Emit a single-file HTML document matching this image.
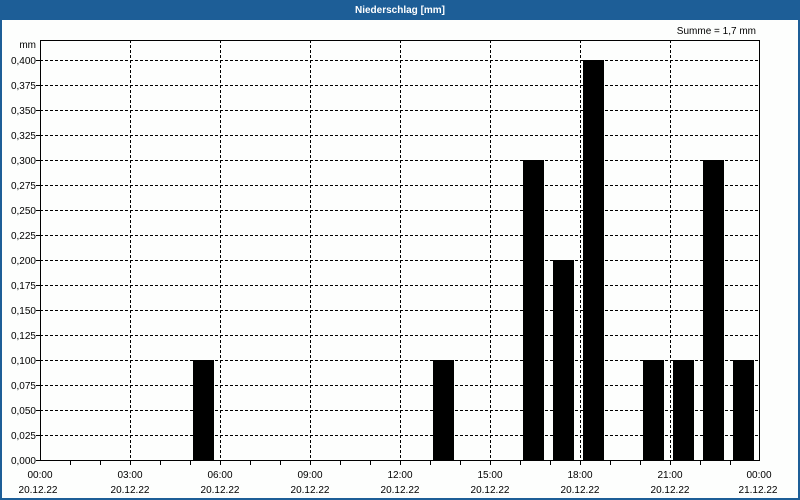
<!DOCTYPE html>
<html><head><meta charset="utf-8"><style>
html,body{margin:0;padding:0;background:#fff;}
svg{display:block;}
text{font-family:"Liberation Sans",sans-serif;font-size:10px;fill:#000;}
</style></head><body>
<svg width="800" height="500" viewBox="0 0 800 500" xmlns="http://www.w3.org/2000/svg">
<rect x="0" y="0" width="800" height="500" fill="#1d5e97"/>
<rect x="2" y="20" width="796" height="478" fill="#fdfefd"/>
<text x="400" y="13" text-anchor="middle" style="fill:#fff;font-weight:bold;font-size:10px">Niederschlag [mm]</text>
<text x="756" y="34" text-anchor="end">Summe = 1,7 mm</text>
<text x="36" y="48" text-anchor="end">mm</text>
<g stroke="#000" stroke-width="1" stroke-dasharray="3,2" shape-rendering="crispEdges">
<path d="M40 60.5H760M40 85.5H760M40 110.5H760M40 135.5H760M40 160.5H760M40 185.5H760M40 210.5H760M40 235.5H760M40 260.5H760M40 285.5H760M40 310.5H760M40 335.5H760M40 360.5H760M40 385.5H760M40 410.5H760M40 435.5H760"/>
<path d="M130.5 40V460M220.5 40V460M310.5 40V460M400.5 40V460M490.5 40V460M580.5 40V460M670.5 40V460"/>
</g>
<g fill="#000" shape-rendering="crispEdges">
<rect x="193" y="360" width="21" height="100"/>
<rect x="433" y="360" width="21" height="100"/>
<rect x="523" y="160" width="21" height="300"/>
<rect x="553" y="260" width="21" height="200"/>
<rect x="583" y="60" width="21" height="400"/>
<rect x="643" y="360" width="21" height="100"/>
<rect x="673" y="360" width="21" height="100"/>
<rect x="703" y="160" width="21" height="300"/>
<rect x="733" y="360" width="21" height="100"/>
</g>
<g stroke="#000" stroke-width="1" fill="none" shape-rendering="crispEdges">
<rect x="40.5" y="40.5" width="719" height="420"/>
<path d="M36 60.5H40M36 85.5H40M36 110.5H40M36 135.5H40M36 160.5H40M36 185.5H40M36 210.5H40M36 235.5H40M36 260.5H40M36 285.5H40M36 310.5H40M36 335.5H40M36 360.5H40M36 385.5H40M36 410.5H40M36 435.5H40M36 460.5H40"/>
<path d="M70.5 460V465M100.5 460V465M130.5 460V465M160.5 460V465M190.5 460V465M220.5 460V465M250.5 460V465M280.5 460V465M310.5 460V465M340.5 460V465M370.5 460V465M400.5 460V465M430.5 460V465M460.5 460V465M490.5 460V465M520.5 460V465M550.5 460V465M580.5 460V465M610.5 460V465M640.5 460V465M670.5 460V465M700.5 460V465M730.5 460V465"/>
</g>
<g text-anchor="end">
<text x="36" y="64">0,400</text><text x="36" y="89">0,375</text><text x="36" y="114">0,350</text><text x="36" y="139">0,325</text>
<text x="36" y="164">0,300</text><text x="36" y="189">0,275</text><text x="36" y="214">0,250</text><text x="36" y="239">0,225</text>
<text x="36" y="264">0,200</text><text x="36" y="289">0,175</text><text x="36" y="314">0,150</text><text x="36" y="339">0,125</text>
<text x="36" y="364">0,100</text><text x="36" y="389">0,075</text><text x="36" y="414">0,050</text><text x="36" y="439">0,025</text>
<text x="36" y="464">0,000</text>
</g>
<g text-anchor="middle">
<text x="40" y="478">00:00</text><text x="130" y="478">03:00</text><text x="220" y="478">06:00</text><text x="310" y="478">09:00</text>
<text x="400" y="478">12:00</text><text x="490" y="478">15:00</text><text x="580" y="478">18:00</text><text x="670" y="478">21:00</text><text x="759" y="478">00:00</text>
<text x="38" y="493">20.12.22</text><text x="130" y="493">20.12.22</text><text x="220" y="493">20.12.22</text><text x="310" y="493">20.12.22</text>
<text x="400" y="493">20.12.22</text><text x="490" y="493">20.12.22</text><text x="580" y="493">20.12.22</text><text x="670" y="493">20.12.22</text><text x="758" y="493">21.12.22</text>
</g>
</svg>
</body></html>
